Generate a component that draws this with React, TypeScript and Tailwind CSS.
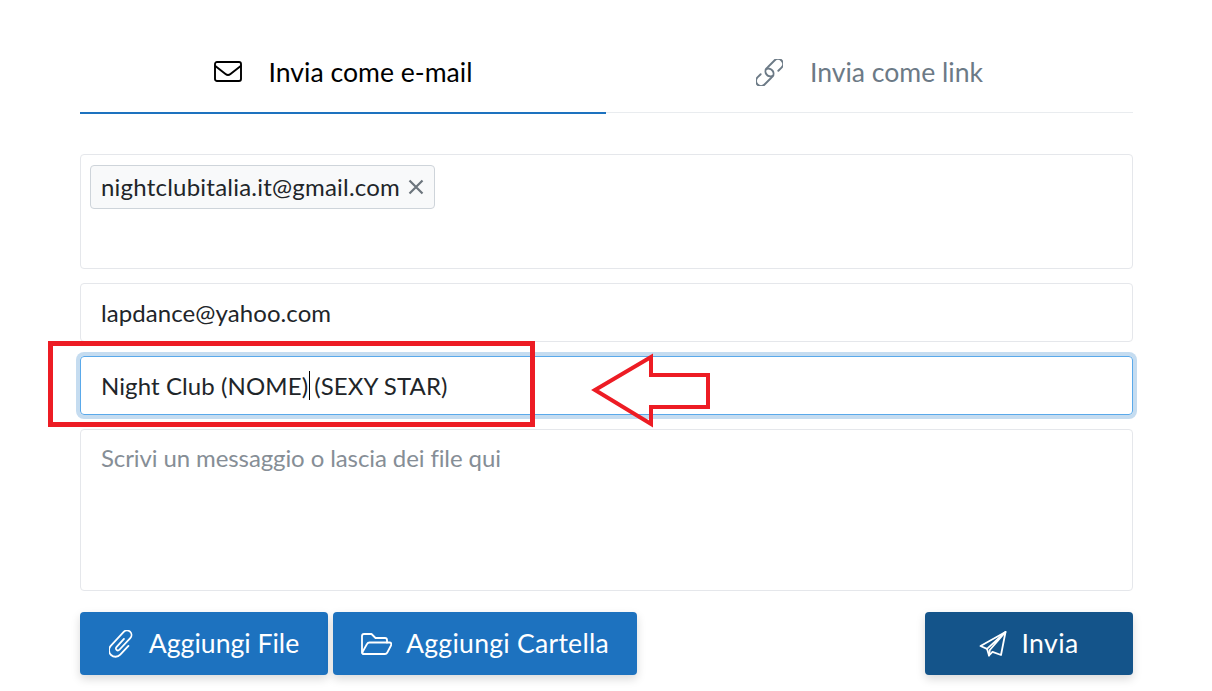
import React from "react";

function Envelope() {
  return (
    <svg width="28" height="21" viewBox="0 0 28 21" fill="none" stroke="#000" strokeWidth="1.9" strokeLinejoin="round" strokeLinecap="round">
      <rect x="1" y="1" width="26" height="19" rx="2" />
      <path d="M1.3 5 L11.5 13 Q14 15 16.5 13 L26.7 5" />
    </svg>
  );
}

function LinkIcon() {
  return (
    <svg width="27" height="27" viewBox="0 0 27 27" fill="none" stroke="#6c7a86" strokeWidth="1.9" strokeLinecap="round">
      <g transform="rotate(-45 13.5 13.5)">
        <path d="M6 8.5 H1.5 A5 5 0 0 0 1.5 18.5 H11 A5 5 0 0 0 13 8.7" />
        <path d="M21 18.5 H25.5 A5 5 0 0 0 25.5 8.5 H16 A5 5 0 0 0 14 18.3" />
      </g>
    </svg>
  );
}

function Clip() {
  return (
    <svg width="26" height="28" viewBox="0 0 26 28" fill="none" stroke="#fff" strokeWidth="1.8" strokeLinecap="round">
      <g transform="translate(13 14) rotate(43)">
        <path d="M6 -3 V9 A6.5 6.5 0 0 1 -7 9 V-10 A4.5 4.5 0 0 1 2 -10 V6 A2 2 0 0 1 -2 6 V-5" />
      </g>
    </svg>
  );
}

function FolderOpen() {
  return (
    <svg width="31" height="22" viewBox="0 0 31 22" fill="none" stroke="#fff" strokeWidth="1.8" strokeLinejoin="round" strokeLinecap="round">
      <path d="M3 21 Q1 21 1 19 V3 Q1 1 3 1 H10.5 L14.5 5 H24 Q26 5 26 7 V9.5" />
      <path d="M3 21 H24 Q25.5 21 26.3 19.5 L30 12.5 Q31 9.5 28.5 9.5 H8.5 Q6.8 9.5 6 11 L1.5 19 Q1 21 3 21 Z" />
    </svg>
  );
}

function Plane() {
  return (
    <svg width="28" height="26" viewBox="0 0 28 26" fill="none" stroke="#fff" strokeWidth="1.8" strokeLinejoin="round" strokeLinecap="round">
      <path d="M26.5 1 L1.5 15 L8 17.8 L10 24.5 L13.5 20.8 L22 24 Z" />
      <path d="M26.5 1 L8 17.8 M26.5 1 L10.8 19 L10 24.5" />
    </svg>
  );
}

export default function App() {
  return (
    <div className="relative h-[691px] w-[1212px] overflow-hidden bg-white pl-20 pr-[79px] font-['Lato',sans-serif] text-[#212529]">
      <div className="flex h-[113px] border-b border-[#e9ecef]">
        <div className="flex h-[114px] w-[526px] items-center justify-center gap-[27px] border-b-2 border-[#1d72bf] pt-[33px] pb-[2px] text-[26.6px] text-black">
          <Envelope />
          <span className="relative top-px">Invia come e-mail</span>
        </div>
        <div className="flex h-[113px] flex-1 items-center justify-center gap-[27px] pt-[33px] pb-[2px] text-[26.6px] text-[#6c7a86]">
          <LinkIcon />
          <span className="relative top-px">Invia come link</span>
        </div>
      </div>

      <div className="mt-[41px] h-[115px] rounded border border-[#e5e7eb] px-[9px] py-[10px]">
        <div className="inline-flex h-[44px] items-center gap-[8px] rounded border border-[#ced4da] bg-[#f8f9fa] pr-[10px] pl-[10px] text-[24px] tracking-[0.22px]">
          <span>nightclubitalia.it@gmail.com</span>
          <svg width="16" height="16" viewBox="0 0 16 16" stroke="#6c757d" strokeWidth="2.2">
            <path d="M1.5 1.5 L14.5 14.5 M14.5 1.5 L1.5 14.5" />
          </svg>
        </div>
      </div>

      <div className="mt-[14px] flex h-[59px] items-center rounded border border-[#e5e7eb] px-5 text-[24px] tracking-[0.08px]">
        lapdance@yahoo.com
      </div>

      <div className="mt-[14px] flex h-[59px] items-center rounded border border-[#5aa9ea] px-5 text-[24px] tracking-[0.1px] shadow-[0_0_0_4px_#c5dcf0]">
        <span>Night Club (NOME)</span>
        <span className="mx-[1px] h-[29px] w-px bg-black" />
        <span className="ml-[3px]">(SEXY STAR)</span>
      </div>

      <div className="mt-[14px] h-[162px] rounded border border-[#e5e7eb] px-5 py-[13px] text-[24px] leading-[30px] tracking-[-0.1px] text-[#868e96]">
        Scrivi un messaggio o lascia dei file qui
      </div>

      <div className="mt-[21px] flex h-[63px] text-[26.6px] text-white">
        <div className="flex w-[248px] items-center justify-center gap-[14px] rounded bg-[#1d72bf] shadow-[0_4px_10px_rgba(0,0,0,0.15)]">
          <Clip />
          <span>Aggiungi File</span>
        </div>
        <div className="ml-[5px] flex w-[304px] items-center justify-center gap-[14px] rounded bg-[#1d72bf] shadow-[0_4px_10px_rgba(0,0,0,0.15)]">
          <FolderOpen />
          <span className="tracking-[0.25px]">Aggiungi Cartella</span>
        </div>
        <div className="ml-auto flex w-[208px] items-center justify-center gap-[14px] rounded bg-[#14548a] shadow-[0_4px_10px_rgba(0,0,0,0.15)]">
          <Plane />
          <span className="tracking-[0.4px]">Invia</span>
        </div>
      </div>

      <div className="absolute left-[48px] top-[341px] h-[86px] w-[487px] border-[5px] border-[#ed1c24]" />
      <svg className="absolute left-[590px] top-[352px]" width="124" height="76" viewBox="0 0 124 76" fill="none" stroke="#ed1c24" strokeWidth="4">
        <path d="M5 38 L61 5 L61 23 L118 23 L118 55 L61 55 L61 72 Z" />
      </svg>
    </div>
  );
}
